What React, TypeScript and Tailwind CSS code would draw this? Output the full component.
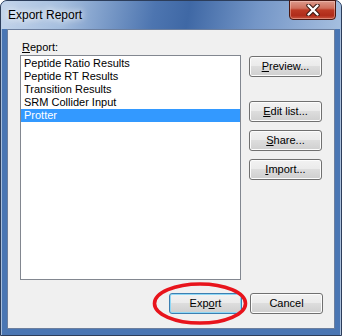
import React from "react";

const reports = [
  "Peptide Ratio Results",
  "Peptide RT Results",
  "Transition Results",
  "SRM Collider Input",
  "Protter",
];

function WinButton({
  children,
  isDefault,
  className,
}: {
  children: React.ReactNode;
  isDefault?: boolean;
  className?: string;
}) {
  return (
    <div
      className={
        "flex h-[21px] w-[73px] items-center justify-center rounded-[3px] border text-[11px] text-black " +
        (isDefault
          ? "border-[#3c7fb1] bg-[linear-gradient(#f2f2f2_0%,#ebebeb_45%,#dddddd_50%,#cfcfcf_100%)] shadow-[inset_0_0_0_1px_#8fd8f6] "
          : "border-[#707070] bg-[linear-gradient(#f2f2f2_0%,#ebebeb_45%,#dddddd_50%,#cfcfcf_100%)] shadow-[inset_0_0_0_1px_#fcfcfc] ") +
        (className ?? "")
      }
    >
      {children}
    </div>
  );
}

export default function App() {
  return (
    <div className="relative h-[336px] w-[342px] overflow-hidden bg-white font-['Liberation_Sans',Arial,sans-serif]">
      <div className="flex h-full w-full flex-col rounded-t-[7px] border border-[#2c3d5a] bg-[#4a76b3] shadow-[inset_1px_0_0_#a9bfdc,inset_-1px_0_0_#a9bfdc]">
        {/* title bar */}
        <div className="flex h-[28px] shrink-0 rounded-t-[6px] bg-[linear-gradient(100deg,#c3d4ea_0%,#a6bfdf_18%,#4d75b0_45%,#3f68a5_55%,#7496c7_75%,#93afd6_90%,#a5bfdf_100%)]">
          <div className="pl-[7px] pt-[6px] text-[12px] leading-[16px] text-black [text-shadow:0_0_6px_#ffffff,0_0_10px_#ffffff]">
            Export Report
          </div>
          <div className="ml-auto mr-[5px] mt-[-1px] flex h-[20px] w-[47px] items-center justify-center rounded-b-[4px] border border-[#4a1710] bg-[linear-gradient(#dc9a8c_0%,#cf6f5c_40%,#bc3a24_50%,#b02c1a_80%,#c8553f_100%)] shadow-[inset_0_0_0_1px_rgba(255,220,210,0.4)]">
            <svg width="14" height="12" viewBox="0 0 14 12">
              <path
                d="M2.5 1.5 L11.5 10.5 M11.5 1.5 L2.5 10.5"
                stroke="#3b1a14"
                strokeWidth="4.4"
                strokeLinecap="round"
              />
              <path
                d="M2.5 1.5 L11.5 10.5 M11.5 1.5 L2.5 10.5"
                stroke="#ffffff"
                strokeWidth="2.4"
                strokeLinecap="round"
              />
            </svg>
          </div>
        </div>

        {/* client area */}
        <div className="mx-[6px] mb-[6px] flex flex-1 flex-col border border-[#6c7f9e] bg-[#f0f0f0] pl-[12px] pr-[11px] pt-[10px]">
          <div className="pl-[2px] text-[11px] leading-[15px] text-black">
            <u className="underline-offset-[1px]">R</u>eport:
          </div>
          <div className="flex gap-[8px]">
            <div className="h-[225px] w-[221px] border border-[#828790] bg-white pt-[1px]">
              {reports.map((r) => (
                <div
                  key={r}
                  className={
                    "h-[13px] pl-[3px] text-[11px] leading-[13px] " +
                    (r === "Protter" ? "bg-[#3399ff] text-white" : "text-black")
                  }
                >
                  {r}
                </div>
              ))}
            </div>
            <div className="mt-[1px] flex flex-col">
              <WinButton>
                <span>
                  <u className="underline-offset-[1px]">P</u>review...
                </span>
              </WinButton>
              <WinButton className="mt-[24px]">
                <span>
                  <u className="underline-offset-[1px]">E</u>dit list...
                </span>
              </WinButton>
              <WinButton className="mt-[8px]">
                <span>
                  <u className="underline-offset-[1px]">S</u>hare...
                </span>
              </WinButton>
              <WinButton className="mt-[8px]">
                <span>
                  <u className="underline-offset-[1px]">I</u>mport...
                </span>
              </WinButton>
            </div>
          </div>
          <div className="mt-[13px] flex justify-end gap-[8px]">
            <WinButton isDefault>
              <span>
                Exp<u className="underline-offset-[1px]">o</u>rt
              </span>
            </WinButton>
            <WinButton>Cancel</WinButton>
          </div>
        </div>
      </div>

      {/* red annotation ellipse */}
      <svg
        className="pointer-events-none absolute left-[150px] top-[280px]"
        width="100"
        height="48"
        viewBox="0 0 100 48"
      >
        <ellipse
          cx="50"
          cy="23.5"
          rx="45.5"
          ry="19.5"
          fill="none"
          stroke="#e8141c"
          strokeWidth="3.6"
        />
      </svg>
    </div>
  );
}
